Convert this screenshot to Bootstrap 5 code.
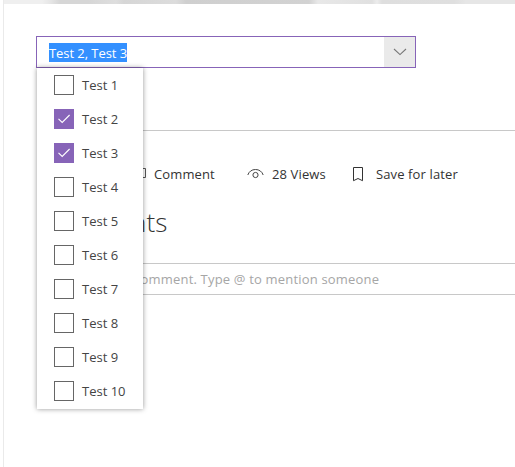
<!DOCTYPE html>
<html lang="en">
<head>
<meta charset="utf-8">
<meta name="viewport" content="width=device-width, initial-scale=1">
<title>Comments</title>
<link href="https://cdn.jsdelivr.net/npm/bootstrap@5.3.0/dist/css/bootstrap.min.css" rel="stylesheet">
<style>
body{font-family:"Open Sans","Noto Sans",sans-serif;font-size:13px;line-height:20px;color:#333;background:#fff;overflow:hidden}
.page{margin-left:3px;height:467px;border-left:1px solid #eaeaea}
.banner{height:4px;background:linear-gradient(90deg,#efefef 0 38px,#e6e6e6 46px,#d6d6d6 56px 84px,#dedede 112px,#d6d6d6 120px,#dcdcdc 172px,#cfcfcf 182px,#d2d2d2 305px,#e8e8e8 314px,#e0e0e0 368px,#ececec 373px,#dedede 378px,#dfdfdf 450px,#e6e6e6 462px)}
.body-area{padding:32px 0 0 32px}
.picker{width:380px;height:32px;border:1px solid #8764b8}
.picker-value{padding-left:12px;padding-top:1px}
.picked{background:#3390ff;color:#fff;height:19px;line-height:20px;width:78px;letter-spacing:-.06px}
.caret-box{width:31px;background:#eaeaea}
.options{top:31px;left:0;width:106px;height:341px;background:#fff;box-shadow:0 0 5px rgba(0,0,0,.42);z-index:5}
.option{height:34px;padding-left:17px;gap:8px;color:#444}
.tick{width:20px;height:20px;border:1px solid #666}
.tick.on{background:#8764b8;border-color:#8764b8}
.rule{margin:62px 0 0 12px;border-top:1px solid #c8c8c8}
.actions{margin-top:33px;height:20px;padding-left:94px;letter-spacing:.12px}
.t{white-space:nowrap}
.heading{font-size:26px;font-weight:300;line-height:34px;margin-top:21px;padding-left:3px;color:#333;letter-spacing:.1px}
.comment-box{margin:24px 0 0 48px;height:32px;border:1px solid #c8c8c8;border-right:0;color:#a6a6a6;padding-left:10px;letter-spacing:.18px}
</style>
<script src="https://cdn.jsdelivr.net/npm/bootstrap@5.3.0/dist/js/bootstrap.bundle.min.js"></script>
</head>
<body>
<main class="page">
<div class="banner"></div>
<div class="body-area">
 <div class="picker position-relative d-flex">
  <div class="picker-value flex-grow-1 d-flex align-items-center"><span class="picked t">Test 2, Test 3</span></div>
  <div class="caret-box d-flex align-items-center justify-content-center"><svg width="14" height="8" fill="none" stroke="#777" stroke-width="1.1"><path d="M1 1l6 5.6L13 1"/></svg></div>
  <div class="options position-absolute">
   <div class="option d-flex align-items-center"><span class="tick"></span><span class="t">Test 1</span></div>
   <div class="option d-flex align-items-center"><span class="tick on d-flex align-items-center justify-content-center"><svg width="14" height="10" fill="none" stroke="#fff" stroke-width="1.1"><path d="M1.5 4.8l3.7 3.7L12.6 1"/></svg></span><span class="t">Test 2</span></div>
   <div class="option d-flex align-items-center"><span class="tick on d-flex align-items-center justify-content-center"><svg width="14" height="10" fill="none" stroke="#fff" stroke-width="1.1"><path d="M1.5 4.8l3.7 3.7L12.6 1"/></svg></span><span class="t">Test 3</span></div>
   <div class="option d-flex align-items-center"><span class="tick"></span><span class="t">Test 4</span></div>
   <div class="option d-flex align-items-center"><span class="tick"></span><span class="t">Test 5</span></div>
   <div class="option d-flex align-items-center"><span class="tick"></span><span class="t">Test 6</span></div>
   <div class="option d-flex align-items-center"><span class="tick"></span><span class="t">Test 7</span></div>
   <div class="option d-flex align-items-center"><span class="tick"></span><span class="t">Test 8</span></div>
   <div class="option d-flex align-items-center"><span class="tick"></span><span class="t">Test 9</span></div>
   <div class="option d-flex align-items-center"><span class="tick"></span><span class="t">Test 10</span></div>
  </div>
 </div>
 <div class="rule"></div>
 <div class="actions d-flex align-items-center">
  <svg class="me-2" width="16" height="16" fill="none" stroke="#555"><path d="M.5 2.5h15v9H7l-3 3v-3H.5z"/></svg>
  <span class="t" style="width:93px">Comment</span>
  <svg width="17" height="16" fill="none" stroke="#444"><path d="M.8 9C2 5.500 4.800 3.500 8.500 3.500S15 5.500 16.200 9"/><circle cx="8.500" cy="9" r="2.600"/></svg>
  <span class="t" style="width:80px;margin-left:8px">28 Views</span>
  <svg width="12" height="16" fill="none" stroke="#333"><path d="M1.500 1.500h9v13.200L6 12.500l-4.500 2.200z"/></svg>
  <span class="t" style="margin-left:12px">Save for later</span>
 </div>
 <h2 class="heading mb-0">Comments</h2>
 <div class="comment-box d-flex align-items-center"><span class="t">Add a comment. Type @ to mention someone</span></div>
</div>
</main>
</body>
</html>
